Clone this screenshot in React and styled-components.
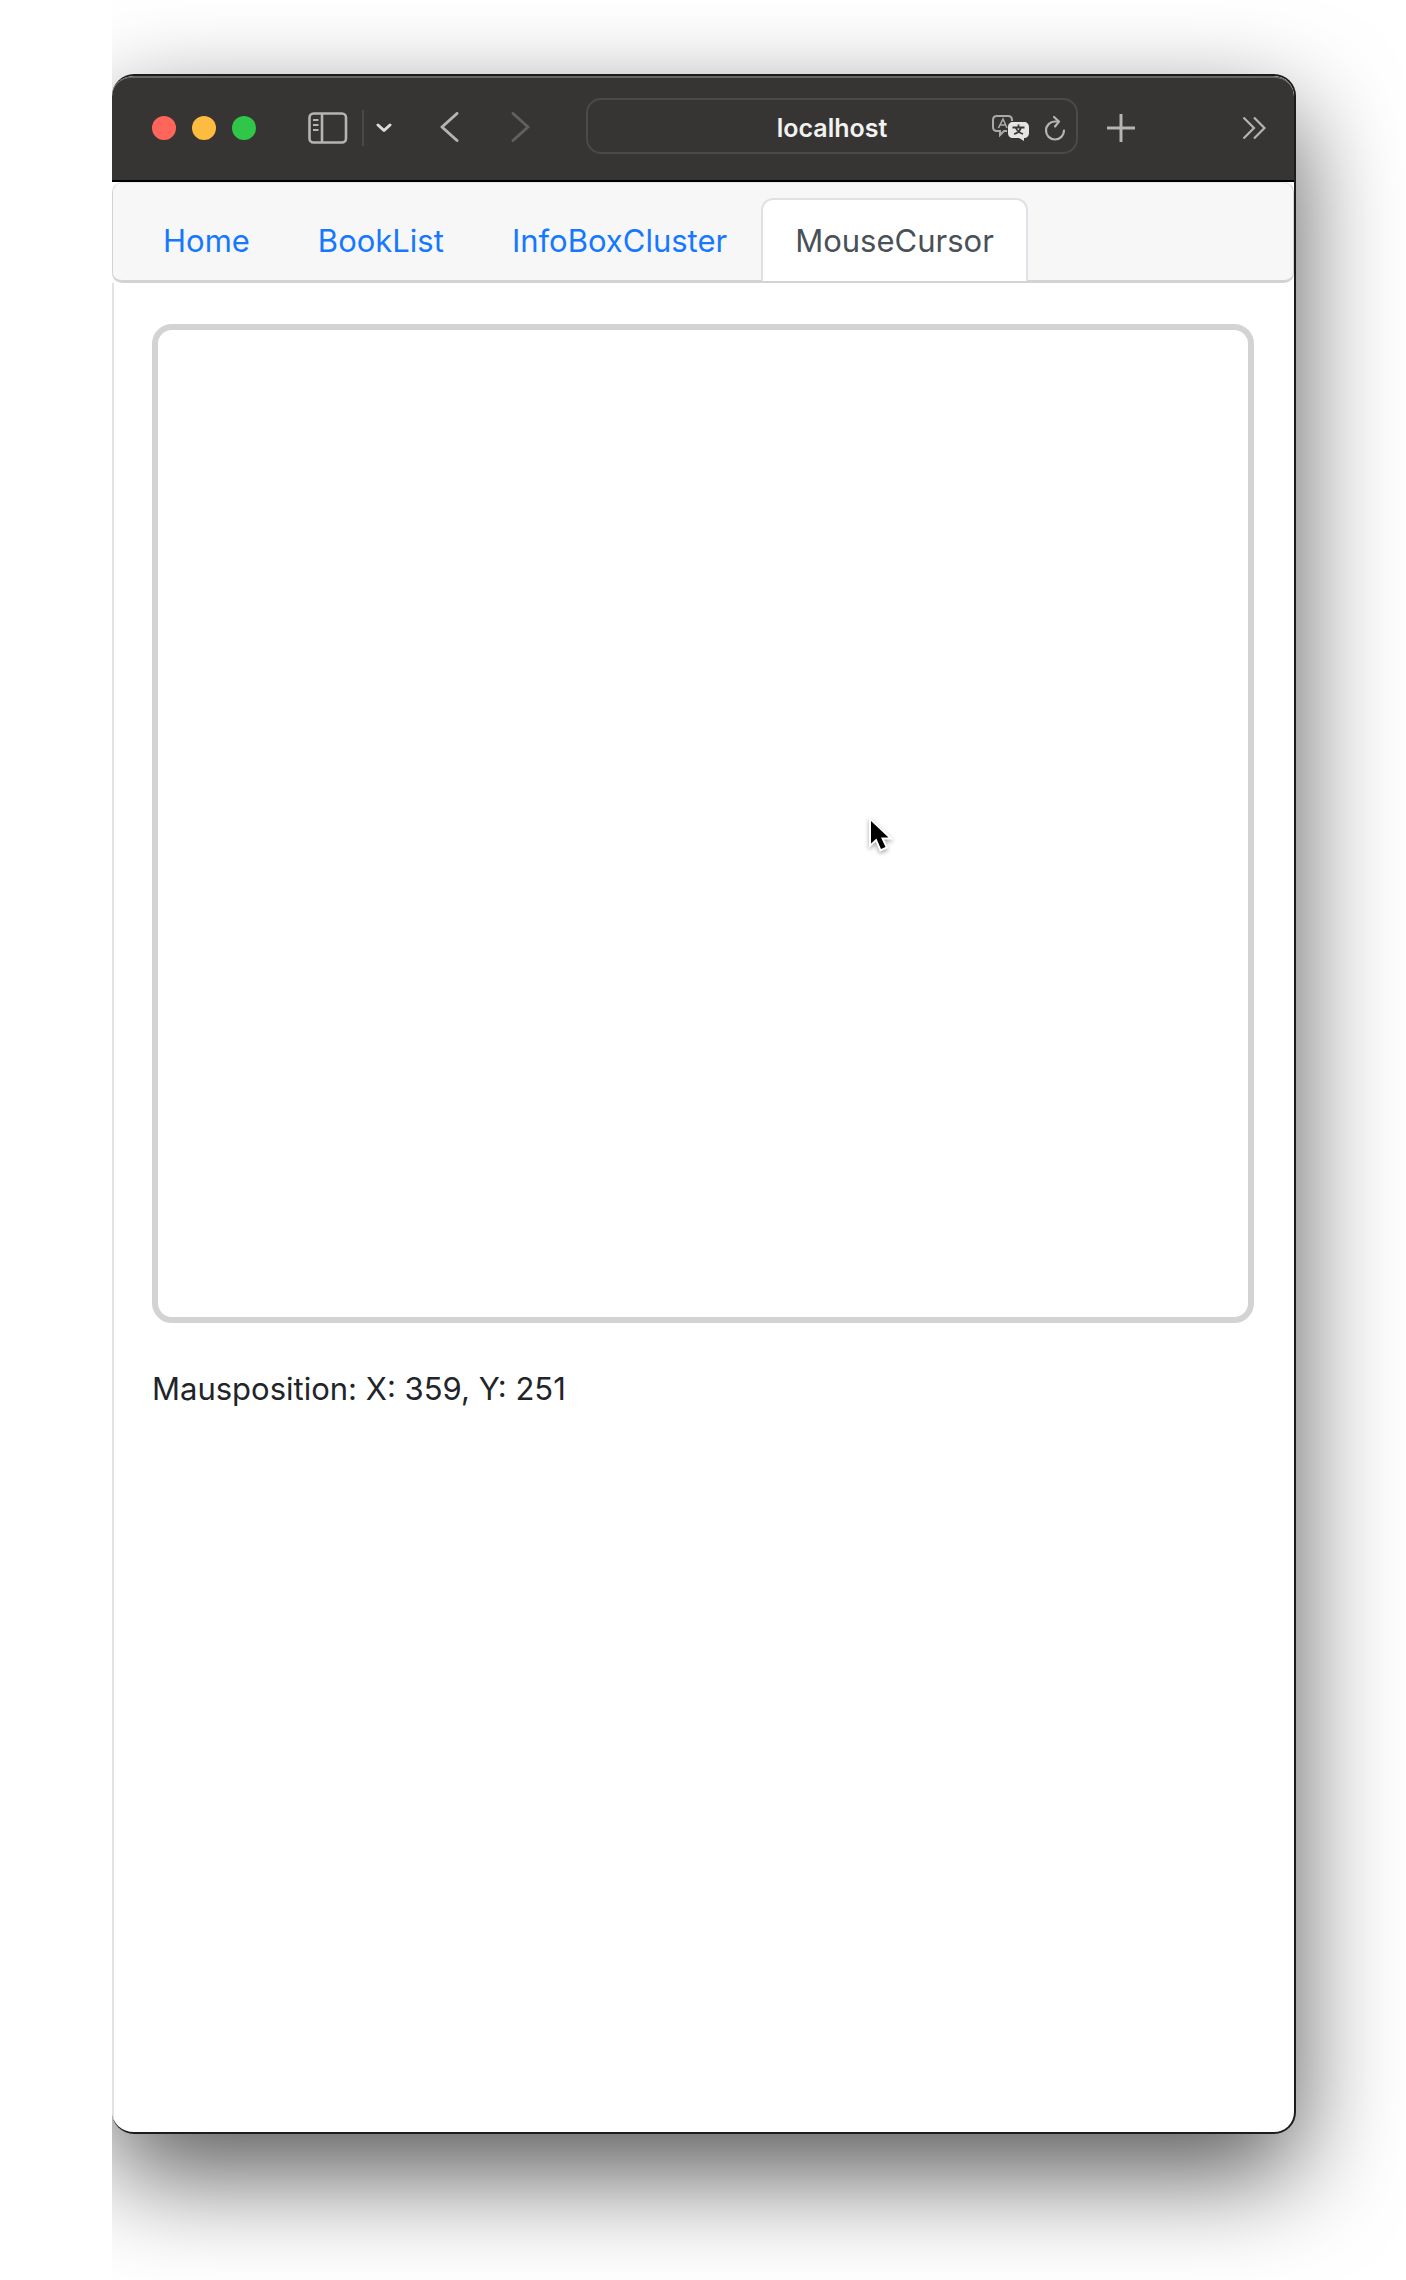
import React, { useState } from "react";
import styled, { createGlobalStyle } from "styled-components";

const GlobalStyle = createGlobalStyle`
  *, *::before, *::after { box-sizing: border-box; }
  body {
    margin: 0;
    background: #fff;
    color: #212529;
    font-family: Inter, "Liberation Sans", sans-serif;
    font-size: 31px;
    line-height: 48px;
  }
`;

const Stage = styled.div`
  min-height: 100vh;
  margin-left: 112px;
  padding: 74px 110px 146px 0;
  overflow: hidden;
`;

const BrowserWindow = styled.div`
  display: flex;
  flex-direction: column;
  min-height: calc(100vh - 220px);
  border: 2px solid #1c1c1c;
  border-left: 0;
  border-radius: 22px;
  background: #fff;
  box-shadow: 0 40px 104px rgba(0, 0, 0, 0.66);
  overflow: hidden;
`;

const Toolbar = styled.header`
  display: flex;
  align-items: center;
  height: 106px;
  padding: 0 28px 2px 40px;
  border-top: 2px solid #676561;
  border-bottom: 2px solid #000;
  border-radius: 20px 20px 0 0;
  background: #373533;
`;

const Lights = styled.div`
  display: flex;
  gap: 16px;
  margin-right: 52px;
`;

const Light = styled.button`
  width: 24px;
  height: 24px;
  padding: 0;
  border: 0;
  border-radius: 50%;
  background: ${(p) => p.$color};
`;

const ToolButton = styled.button`
  display: flex;
  align-items: center;
  justify-content: center;
  flex: none;
  width: ${(p) => p.$width}px;
  height: 40px;
  padding: 0;
  border: 0;
  background: none;
  color: ${(p) => p.$color || "#b5b4b2"};
  svg { flex: none; display: block; }
`;

const Divider = styled.span`
  width: 2px;
  height: 36px;
  margin: 0 12px 0 14px;
  background: #4b4947;
`;

const NavButtons = styled.div`
  display: flex;
  gap: 50px;
  margin: 0 56px 0 48px;
`;

const AddressBar = styled.div`
  display: grid;
  grid-template-columns: 84px 1fr 84px;
  align-items: center;
  flex: 1;
  min-width: 0;
  height: 56px;
  margin-bottom: 4px;
  padding-top: 4px;
  border: 2px solid #4b4a48;
  border-radius: 15px;
`;

const AddressInput = styled.input`
  grid-column: 2;
  width: 100%;
  height: 40px;
  padding: 0;
  border: 0;
  outline: 0;
  background: none;
  color: #f2f2f1;
  font: 600 25px Inter, "Liberation Sans", sans-serif;
  text-align: center;
`;

const AddressActions = styled.div`
  display: flex;
  gap: 14px;
`;

const EndActions = styled.div`
  display: flex;
  justify-content: space-between;
  width: 160px;
  margin-left: 28px;
`;

const CardHeader = styled.nav`
  padding: 15px 32px 0 16px;
  border: 1px solid #d3d3d3;
  border-top-color: #e6e6e6;
  border-bottom: 3px solid #d3d3d3;
  border-radius: 10px;
  background: #f7f7f7;
`;

const TabList = styled.ul`
  display: flex;
  margin: 0 0 -1px;
  padding: 0;
  list-style: none;
`;

const TabLink = styled.a`
  display: block;
  padding: 17px 32px 16px;
  border: 2px solid ${(p) => (p.$active ? "#dee2e6" : "transparent")};
  border-bottom: 0;
  border-radius: 12px 12px 0 0;
  background: ${(p) => (p.$active ? "#fff" : "transparent")};
  color: ${(p) => (p.$active ? "#495057" : "#1677ff")};
  text-decoration: none;
`;

const Content = styled.main`
  flex: 1;
  padding: 41px 40px 41px 38px;
  border-left: 2px solid #e2e2e2;
`;

const TrackArea = styled.div`
  position: relative;
  height: 999px;
  border: 6px solid #d3d3d3;
  border-radius: 20px;
  cursor: none;
`;

const Pointer = styled.svg`
  position: absolute;
  filter: drop-shadow(0 2px 2px rgba(0, 0, 0, 0.35));
  pointer-events: none;
`;

const Position = styled.p`
  margin: 42px 0 0;
`;

const tabs = ["Home", "BookList", "InfoBoxCluster", "MouseCursor"];

function SidebarIcon() {
  return (
    <svg width="40" height="32" viewBox="0 0 40 32" fill="none" stroke="currentColor" strokeWidth="2.600">
      <rect x="1.500" y="1.500" width="36.500" height="29" rx="4" />
      <path d="M14 2v28" />
      <path d="M5 8h5.500M5 13h5.500M5 18h5.500" strokeWidth="2" />
    </svg>
  );
}

function TranslateIcon() {
  return (
    <svg width="38" height="26" viewBox="0 0 38 26" fill="none">
      <path d="M15 16h-3l-4 4v-4H5c-2.500 0-4-1.500-4-4V5c0-2.500 1.500-4 4-4h11c2.500 0 4 1.500 4 4v1" stroke="#aaa9a7" strokeWidth="2" />
      <path d="M6.500 13l4.500-9 4 9M8 10h5" stroke="#aaa9a7" strokeWidth="1.600" />
      <path d="M21 7h11c3 0 5 2 5 5v6c0 3-2 5-5 5v3l-5-3h-6c-3 0-5-2-5-5v-6c0-3 2-5 5-5z" fill="#e4e4e3" />
      <path d="M20.500 12.500h12M26.500 9.500v3M22 19c4-1 6-3 7-6.500M24 13c1 3 4 5 7 6" stroke="#3a3836" strokeWidth="1.800" />
    </svg>
  );
}

function ReloadIcon() {
  return (
    <svg width="22" height="26" viewBox="0 0 22 26" fill="none" stroke="currentColor" strokeWidth="2.200" strokeLinecap="round" strokeLinejoin="round">
      <path d="M14 6.500h-3a9 9 0 1 0 9 9" />
      <path d="M10 2l5 4.500-4 5" />
    </svg>
  );
}

export default function App() {
  const [mouse, setMouse] = useState({ x: 359, y: 251, left: 710, top: 487 });

  const track = (event) => {
    const area = event.currentTarget.getBoundingClientRect();
    setMouse({
      x: Math.round(event.clientX),
      y: Math.round(event.clientY),
      left: event.clientX - area.left - 10,
      top: event.clientY - area.top - 10,
    });
  };

  return (
    <>
      <GlobalStyle />
      <Stage>
        <BrowserWindow>
          <Toolbar>
            <Lights>
              <Light $color="#ff655b" aria-label="Close" />
              <Light $color="#fdbc40" aria-label="Minimize" />
              <Light $color="#30c749" aria-label="Zoom" />
            </Lights>
            <ToolButton $width={40} aria-label="Sidebar">
              <SidebarIcon />
            </ToolButton>
            <Divider />
            <ToolButton $width={16} $color="#dddcdb" aria-label="Tab groups">
              <svg width="16" height="10" viewBox="0 0 16 10" fill="none" stroke="currentColor" strokeWidth="3" strokeLinecap="round" strokeLinejoin="round">
                <path d="M2 2l6 5.500L14 2" />
              </svg>
            </ToolButton>
            <NavButtons>
              <ToolButton $width={20} aria-label="Back">
                <svg width="20" height="32" viewBox="0 0 20 32" fill="none" stroke="currentColor" strokeWidth="3" strokeLinecap="round" strokeLinejoin="round">
                  <path d="M17 1.500L2 15l15 13.500" />
                </svg>
              </ToolButton>
              <ToolButton $width={20} $color="#62605e" aria-label="Forward">
                <svg width="20" height="32" viewBox="0 0 20 32" fill="none" stroke="currentColor" strokeWidth="3" strokeLinecap="round" strokeLinejoin="round">
                  <path d="M3 1.500L18 15 3 28.500" />
                </svg>
              </ToolButton>
            </NavButtons>
            <AddressBar>
              <AddressInput aria-label="Address" defaultValue="localhost" />
              <AddressActions>
                <ToolButton $width={38} aria-label="Translate">
                  <TranslateIcon />
                </ToolButton>
                <ToolButton $width={22} aria-label="Reload">
                  <ReloadIcon />
                </ToolButton>
              </AddressActions>
            </AddressBar>
            <EndActions>
              <ToolButton $width={30} aria-label="New tab">
                <svg width="30" height="30" viewBox="0 0 30 30" fill="none" stroke="currentColor" strokeWidth="3">
                  <path d="M15 1v28M1 15h28" />
                </svg>
              </ToolButton>
              <ToolButton $width={24} aria-label="More tools">
                <svg width="24" height="24" viewBox="0 0 24 24" fill="none" stroke="currentColor" strokeWidth="2.200">
                  <path d="M1.500 1.500L12 12 1.500 22.500M12 1.500L22.500 12 12 22.500" />
                </svg>
              </ToolButton>
            </EndActions>
          </Toolbar>
          <CardHeader>
            <TabList>
              {tabs.map((tab) => (
                <li key={tab}>
                  <TabLink href={`#${tab}`} $active={tab === "MouseCursor"}>
                    {tab}
                  </TabLink>
                </li>
              ))}
            </TabList>
          </CardHeader>
          <Content>
            <TrackArea onMouseMove={track}>
              <Pointer width="28" height="38" viewBox="0 0 28 38" style={{ left: mouse.left, top: mouse.top }}>
                <path
                  d="M3 4v22.500l5.400-5 4.600 10.500 4.500-2-4.500-9.500h7.500z"
                  fill="#000"
                  stroke="#fff"
                  strokeWidth="4"
                  paintOrder="stroke"
                />
              </Pointer>
            </TrackArea>
            <Position>
              Mausposition: X: {mouse.x}, Y: {mouse.y}
            </Position>
          </Content>
        </BrowserWindow>
      </Stage>
    </>
  );
}
